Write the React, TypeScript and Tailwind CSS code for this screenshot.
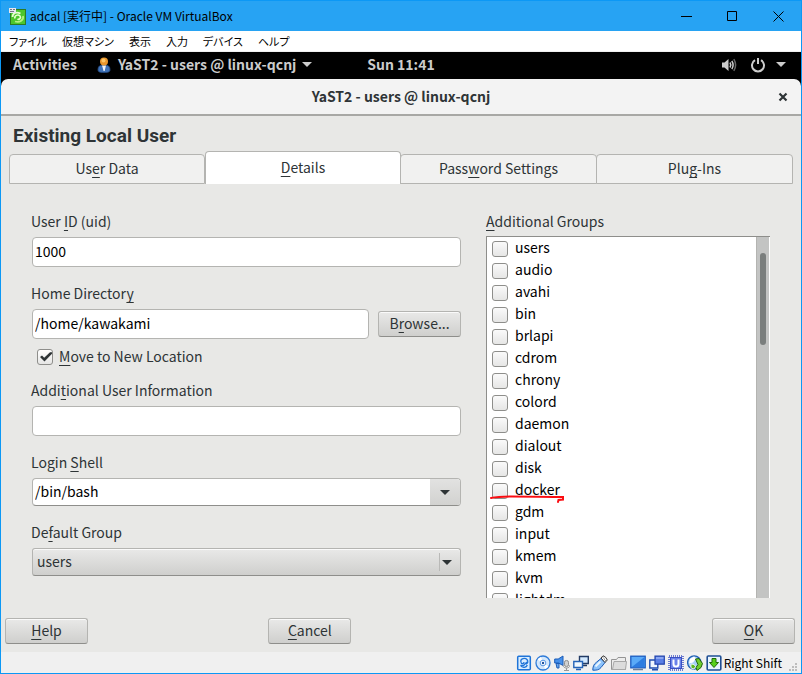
import React from 'react';

const ui = 'font-["Noto_Sans_CJK_JP",sans-serif]';
const raised = 'border border-[#b4b4b1] border-b-[#8e8e8b] rounded-[3px] bg-linear-to-b from-[#e9e9e8] to-[#cfcfcd] shadow-[inset_0_1px_0_#fafafa]';
const push = `h-[26px] w-[83px] shrink-0 pb-[2px] ${raised}`;
const field = 'h-[30px] w-full min-w-0 rounded-[4px] border border-[#b4b4b1] bg-white px-[2px] pb-[2px] text-[14px] text-black outline-none';
const label = '-ml-px mb-[5px] block h-5 leading-[18px]';

const groups = [
  'users', 'audio', 'avahi', 'bin', 'brlapi', 'cdrom', 'chrony', 'colord', 'daemon',
  'dialout', 'disk', 'docker', 'gdm', 'input', 'kmem', 'kvm', 'lightdm',
];

const menus = ['ファイル', '仮想マシン', '表示', '入力', 'デバイス', 'ヘルプ'];

/** Text with one underlined access key, marked by a leading underscore. */
function Mnemonic({ text }: { text: string }) {
  const i = text.indexOf('_');
  return (
    <span className="whitespace-pre">
      {text.slice(0, i)}
      <span className="underline decoration-1 underline-offset-3 [text-decoration-skip-ink:none]">{text[i + 1]}</span>
      {text.slice(i + 2)}
    </span>
  );
}

function Caret({ className = '' }: { className?: string }) {
  return (
    <svg width="10" height="5" viewBox="0 0 10 5" className={className} aria-hidden="true">
      <path d="M0 0h10L5 5z" fill="currentColor" />
    </svg>
  );
}

function TitleBar() {
  return (
    <header className="flex h-[30px] items-center bg-[#27a3f3] pl-2 text-black">
      <svg width="17" height="17" viewBox="0 0 17 17" aria-hidden="true">
        <rect x="1" y="1" width="16" height="16" fill="#4cc62c" />
        <rect x="1.5" y="1.5" width="15" height="15" fill="none" stroke="#2c7b22" />
        <path d="M3.500 9c0-4 4-5.500 8-3.500" fill="none" stroke="#e8ffd0" strokeWidth="1.800" />
        <path d="M14 8c1 4-3 7-8 5.500" fill="none" stroke="#b4f080" strokeWidth="1.800" />
        <path d="M6 10.500c-1-3 3-4.500 5-2.500 1.500 2-1 4-2.500 3" fill="none" stroke="#e8ffd0" strokeWidth="1.600" />
        <rect width="7" height="5" fill="#e6e6ee" />
        <path d="M1 1.500h2M4 1.500h2M1 3.500h4" stroke="#77778a" />
      </svg>
      <h1 className="ml-1 flex-1 whitespace-nowrap text-[12px]">adcal [実行中] - Oracle VM VirtualBox</h1>
      <button aria-label="Minimize" className="flex h-full w-[46px] items-center justify-center">
        <svg width="11" height="11"><path d="M0 5.5h11" stroke="#000" /></svg>
      </button>
      <button aria-label="Maximize" className="flex h-full w-[46px] items-center justify-center">
        <svg width="11" height="11"><path d="M.5.5h9v9h-9z" fill="none" stroke="#000" /></svg>
      </button>
      <button aria-label="Close" className="flex h-full w-[46px] items-center justify-center">
        <svg width="11" height="11"><path d="M.5.5l10 10M10.500.5l-10 10" stroke="#000" /></svg>
      </button>
    </header>
  );
}

function TopBar() {
  return (
    <div className="grid h-[27px] grid-cols-[1fr_auto_1fr] items-center bg-black px-3 pb-[2px] text-[14px] font-bold text-[#cccccc]">
      <div className="flex items-center">
        <button>Activities</button>
        <svg width="14" height="16" viewBox="0 0 14 16" className="ml-5" aria-hidden="true">
          <path d="M1 13c0-4 2-5 6-5s6 1 6 5c0 2-2 2.500-6 2.500S1 15 1 13z" fill="#3f72b8" stroke="#254a80" strokeWidth=".8" />
          <path d="M5 8.500h4L7.600 14H6.600z" fill="#eef3fa" />
          <circle cx="7" cy="4.500" r="4" fill="#e9962c" />
          <circle cx="6.500" cy="3.500" r="2" fill="#fbc465" />
        </svg>
        <button className="ml-[7px] flex items-center whitespace-nowrap">
          YaST2 - users @ linux-qcnj
          <Caret className="ml-[6px]" />
        </button>
      </div>
      <span>Sun 11:41</span>
      <button aria-label="System menu" className="flex items-center justify-self-end pr-[3px]">
        <svg width="16" height="14" viewBox="0 0 16 14" aria-hidden="true">
          <path d="M1 4.500h2.500L7.500 1v12L3.500 9.500H1z" fill="#ccc" />
          <path d="M9 4.500q1.600 2.500 0 5M10.800 3q2.600 4 0 8" fill="none" stroke="#ccc" strokeWidth="1.500" />
          <path d="M12.800 1.200q3.600 5.800 0 11.600" fill="none" stroke="#666" strokeWidth="1.500" />
        </svg>
        <svg width="16" height="16" viewBox="0 0 16 16" className="ml-[13px]" aria-hidden="true">
          <path d="M5 3.200a6 6 0 1 0 6 0M8 1v6" fill="none" stroke="#ccc" strokeWidth="2" />
        </svg>
        <Caret className="ml-[10px]" />
      </button>
    </div>
  );
}

const tabs = [
  { text: 'Us_er Data', active: false },
  { text: '_Details', active: true },
  { text: 'Pass_word Settings', active: false },
  { text: 'Plu_g-Ins', active: false },
];

function Tabs() {
  return (
    <div role="tablist" className="mx-2 mt-[5px] grid grid-cols-4 items-end">
      {tabs.map((t) => (
        <button
          key={t.text}
          role="tab"
          aria-selected={t.active}
          className={
            t.active
              ? 'h-[33px] rounded-t-[4px] border border-b-0 border-[#b4b4b1] bg-white pb-px'
              : 'h-[30px] rounded-t-[4px] border border-[#b4b4b1] bg-[#f1f1f0] pb-[2px] not-first:-ml-px'
          }
        >
          <Mnemonic text={t.text} />
        </button>
      ))}
    </div>
  );
}

function UserForm() {
  return (
    <div>
      <label htmlFor="uid" className={label}><Mnemonic text="User _ID (uid)" /></label>
      <input id="uid" defaultValue="1000" className={field} />

      <label htmlFor="home" className={`mt-[17px] ${label}`}><Mnemonic text="Home Director_y" /></label>
      <div className="flex items-center gap-[9px]">
        <input id="home" defaultValue="/home/kawakami" className={field} />
        <button className={push}><Mnemonic text="B_rowse..." /></button>
      </div>

      <label className="ml-[5px] mt-2 flex h-5 items-center gap-[6px] leading-[18px]">
        <span className="grid">
          <input type="checkbox" defaultChecked className="col-start-1 row-start-1 size-4 appearance-none rounded-[3px] border border-[#8e8e8b] bg-linear-to-b from-white to-[#e6e6e5]" />
          <svg width="16" height="16" viewBox="0 0 16 16" className="pointer-events-none col-start-1 row-start-1" aria-hidden="true">
            <path d="M3 8l2-1.500 2.200 2.300L13 3.200h2v1.600L7.500 12.500z" fill="#2e3436" />
          </svg>
        </span>
        <span className="pb-[2px]"><Mnemonic text="_Move to New Location" /></span>
      </label>

      <label htmlFor="info" className={`mt-[14px] ${label}`}><Mnemonic text="Addi_tional User Information" /></label>
      <input id="info" className={field} />

      <label htmlFor="shell" className={`mt-[17px] ${label}`}><Mnemonic text="Login _Shell" /></label>
      <div className="flex h-7 overflow-hidden rounded-[4px] border border-[#b4b4b1] border-b-[#8e8e8b] bg-white">
        <input id="shell" defaultValue="/bin/bash" className="min-w-0 flex-1 px-[2px] pb-[2px] text-[14px] text-black outline-none" />
        <button aria-label="Choose login shell" className="flex w-[30px] items-center justify-center bg-linear-to-b from-[#e2e2e1] to-[#d2d2d0]">
          <Caret />
        </button>
      </div>

      <label htmlFor="group" className={`mt-[17px] ${label}`}><Mnemonic text="De_fault Group" /></label>
      <div className="grid">
        <select id="group" className={`col-start-1 row-start-1 h-7 w-full appearance-none pb-px pl-1 ${raised}`}>
          <option>users</option>
        </select>
        <span className="pointer-events-none col-start-1 row-start-1 mr-[9px] flex h-[18px] items-center self-center justify-self-end border-l border-[#b9b9b7] pl-[2px]">
          <Caret />
        </span>
      </div>
    </div>
  );
}

function GroupList() {
  return (
    <fieldset className="min-w-0">
      <legend className="mb-1 h-5 leading-[18px]"><Mnemonic text="_Additional Groups" /></legend>
      <div className="flex h-[362px] border-l border-t border-[#8e8e8b] bg-white text-black">
        <ul className="flex-1 overflow-hidden pl-[5px] pt-px">
          {groups.map((g) => (
            <li key={g} className="relative h-[22px]">
              <label className="flex h-full items-center gap-[7px]">
                <input type="checkbox" className="size-4 appearance-none rounded-[3px] border border-[#8e8e8b] bg-linear-to-b from-[#fafafa] to-[#e6e6e5]" />
                <span className="pb-1 leading-[18px]">{g}</span>
              </label>
              {g === 'docker' && (
                <svg width="76" height="10" viewBox="0 0 76 10" className="absolute -left-[2px] top-[14px]" aria-hidden="true">
                  <path d="M1 4Q8 2.500 22 2.500T73 3v2.500l-4.500.5-.5 2" fill="none" stroke="#fb0d12" strokeWidth="2" strokeLinecap="round" />
                </svg>
              )}
            </li>
          ))}
        </ul>
        <div className="mr-px w-[13px] border-l border-[#b4b4b1] bg-[#c3c4c3] pl-[3px] pt-4">
          <div className="h-[92px] w-[6px] rounded-full bg-[#7a7e7d]" />
        </div>
      </div>
    </fieldset>
  );
}

const blue = '#1f74d8';

/** Device indicators, each on a 16 by 16 canvas. */
const indicators: { name: string; art: React.ReactNode }[] = [
  {
    name: 'Hard disks',
    art: (
      <>
        <rect x="1.700" y="1.200" width="12.600" height="13.600" rx="1" fill="#d9edff" stroke={blue} strokeWidth="1.500" />
        <path d="M11 4.500C9 2.500 4.500 3.500 4.800 6.500S8 9 8 7M11 4.500c1.500 2 .8 4-1 4.500M4.500 10.500c2 3 6 2 6.800-.5M4.500 10.500h3L11 7" fill="none" stroke={blue} strokeWidth="1.300" />
      </>
    ),
  },
  {
    name: 'Optical drives',
    art: (
      <>
        <circle cx="8" cy="8" r="7" fill="#d3e7fc" stroke="#2f7bd8" strokeWidth="1.300" />
        <path d="M8 8L2.500 4.500A7 7 0 0 1 6 2zM8 8l5.500 3.500A7 7 0 0 1 10 14z" fill="#fff" />
        <circle cx="8" cy="8" r="2.800" fill="#fff" stroke="#5a9ae6" />
        <circle cx="8" cy="8" r="1.200" fill="#1c4f9c" />
      </>
    ),
  },
  {
    name: 'Audio',
    art: (
      <>
        <path d="M.7 4h3.500L9 1v9.500L4.500 8H.7z" fill="#4690ea" stroke="#1b5cb8" />
        <path d="M2 8.500h3V13H3z" fill="#6ca6ea" stroke="#1b5cb8" />
        <rect x="10.500" y="5.500" width="4" height="6" rx="1.800" fill="#d0d0d0" stroke="#8d8d8d" />
        <path d="M9 10c0 4 7 4 7 0M12.500 13v2M10 15.500h5" fill="none" stroke="#999" />
      </>
    ),
  },
  {
    name: 'Network',
    art: (
      <>
        <path d="M6.500 1.500h8.800v7H6.500zM10 10.500h4" fill="#d3e9ff" stroke="#233c66" strokeWidth="1.400" />
        <path d="M.8 6.500h8.700v6H.8zM3 14.500h5" fill="#f0f8ff" stroke="#2463b8" strokeWidth="1.400" />
      </>
    ),
  },
  {
    name: 'USB',
    art: (
      <>
        <path d="M.8 15.200c0-3 .7-6 3.700-8L9 3.500 13 7.500 9 12.500c-2 2.700-5 2.700-8.200 2.700z" fill="#8cc2fa" stroke="#1b5cb8" />
        <path d="M9 3l2-2.200q3 .700 4.300 4.200l-2.300 2.500z" fill="#fff" stroke="#333" />
        <path d="M11 2.500l1 1M12.500 4.500l1 1" stroke="#333" />
        <path d="M3.500 11.500l5-5" stroke="#eaf5ff" strokeWidth="1.800" />
      </>
    ),
  },
  {
    name: 'Shared folders',
    art: (
      <>
        <path d="M.5 4.500h5l1.500-2h7.500v12H.5z" fill="#ececec" stroke="#949494" />
        <path d="M1.500 14.500L3 6.500h12.500l-1 8z" fill="#dcdcdc" stroke="#a8a8a8" />
      </>
    ),
  },
  {
    name: 'Display',
    art: (
      <>
        <rect x=".8" y="1.200" width="14.400" height="11.600" fill="#5aaaf8" stroke="#1b5cc0" strokeWidth="1.300" />
        <path d="M1.500 12.200L14.500 2v10.200z" fill="#2d7ce0" />
        <path d="M3 14.500h10" stroke="#6d7f99" strokeWidth="1.500" />
      </>
    ),
  },
  {
    name: 'Recording',
    art: (
      <>
        <path d="M.8 5h8v8h-8zM3 14.800h6" fill="#eef6ff" stroke="#1f4db0" strokeWidth="1.400" />
        <path d="M6 1.200h9.300v8H6z" fill="#5a7fe6" stroke="#2244ac" strokeWidth="1.200" />
        <path d="M7 3h7.500" stroke="#b8ccff" />
      </>
    ),
  },
  {
    name: 'Processor',
    art: (
      <>
        <rect x="1" y="1" width="14" height="14" fill="none" stroke="#4357c8" strokeWidth="1.500" strokeDasharray="1 1" />
        <rect x="2.500" y="2.500" width="11" height="11" fill="#6b82ea" stroke="#3a50c0" />
        <path d="M5.500 4.500V9q0 2.500 2.500 2.500T10.500 9V4.500" fill="none" stroke="#fff" strokeWidth="2" />
      </>
    ),
  },
  {
    name: 'Mouse integration',
    art: (
      <>
        <circle cx="7.200" cy="7.500" r="6.600" fill="#a8d0f8" stroke="#1f5fb4" strokeWidth="1.300" />
        <path d="M3 4l4-2.500 2 2-3 4-4 1z" fill="#fff" />
        <path d="M8.500 4l3.500-.5 3.500 5-1.500 4-4 3-1-3 2-3z" fill="#6fce2e" stroke="#22600c" />
        <path d="M4 9l3 .5 1.500 2-1.500 2.500-3-1z" fill="#5cb826" stroke="#fff" strokeWidth=".8" />
      </>
    ),
  },
  {
    name: 'Keyboard capture',
    art: (
      <>
        <rect x="1.200" y="1" width="13.600" height="14" rx="1" fill="#e8f4ff" stroke="#1f4f94" strokeWidth="1.600" />
        <path d="M6 3.500h4v4h2.500L8 12.500 3.500 7.500H6z" fill="#57d01c" stroke="#206a08" />
      </>
    ),
  },
];

function StatusBar() {
  return (
    <footer className="flex h-[21px] items-center justify-end bg-[#f0f0f0] text-[12px] text-black">
      <div className="flex gap-[3px]">
        {indicators.map((d) => (
          <svg key={d.name} width="16" height="16" viewBox="0 0 16 16" role="img" aria-label={d.name}>{d.art}</svg>
        ))}
      </div>
      <span className="ml-[2px] whitespace-nowrap">Right Shift</span>
      <svg width="10" height="10" viewBox="0 0 10 10" className="ml-[6px] mr-[3px] self-end" aria-hidden="true">
        <path d="M7 0h2v2H7zM4 3h2v2H4zM7 3h2v2H7zM1 6h2v2H1zM4 6h2v2H4zM7 6h2v2H7z" fill="#bdbdbd" />
      </svg>
    </footer>
  );
}

export default function App() {
  return (
    <div className={`border border-[#0c98f5] bg-white text-[14px] text-[#2e3436] ${ui}`}>
      <TitleBar />
      <nav className="flex h-[21px] items-center gap-[15px] border-b border-[#f0f0f0] pl-2 text-[11px] text-black [font-feature-settings:'palt']">
        {menus.map((m) => (
          <button key={m} className="whitespace-nowrap">{m}</button>
        ))}
      </nav>
      <TopBar />
      <div className="bg-black">
        <div className="grid h-[37px] grid-cols-[1fr_auto_1fr] items-center rounded-t-[7px] border-b-2 border-[#a8a8a5] bg-[#f3f3f3] px-3">
          <h2 className="col-start-2 text-[14px] font-bold">YaST2 - users @ linux-qcnj</h2>
          <button aria-label="Close dialog" className="justify-self-end pr-px">
            <svg width="10" height="10" viewBox="0 0 10 10"><path d="M1.500 1.500l7 7M8.500 1.500l-7 7" stroke="#2e3436" strokeWidth="2.200" /></svg>
          </button>
        </div>
      </div>
      <main className="bg-[#e8e8e6] pb-2 pt-[10px]">
        <h3 className="ml-3 h-5 font-[Roboto,sans-serif] text-[19px] font-bold leading-5">Existing Local User</h3>
        <Tabs />
        <div className="grid grid-cols-[429fr_284fr] gap-[25px] pl-[31px] pr-[31px] pt-7">
          <UserForm />
          <GroupList />
        </div>
        <div className="mt-5 flex pl-1 pr-[6px]">
          <button className={push}><Mnemonic text="_Help" /></button>
          <span className="flex-1" />
          <button className={push}><Mnemonic text="_Cancel" /></button>
          <span className="flex-2" />
          <button className={push}><Mnemonic text="_OK" /></button>
        </div>
      </main>
      <StatusBar />
    </div>
  );
}
